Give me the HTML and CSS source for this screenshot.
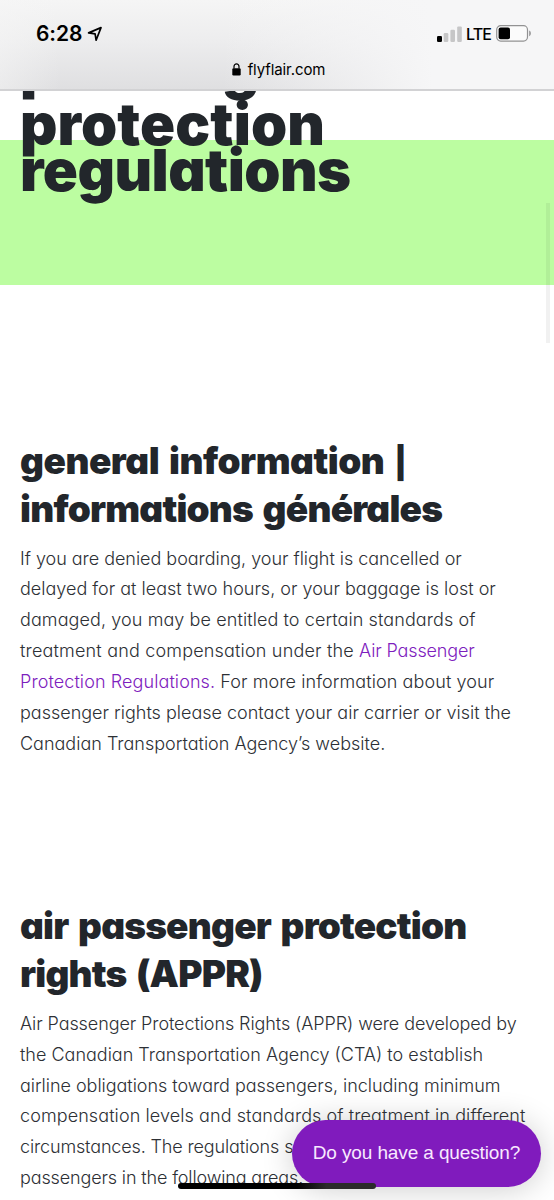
FILE: index.html
```html
<!DOCTYPE html>
<html lang="en">
<head>
<meta charset="utf-8">
<meta name="viewport" content="width=device-width, initial-scale=1">
<title>Passenger protection regulations</title>
<link rel="stylesheet" href="styles.css">
</head>
<body>
<div class="screen">
  <header class="browser">
    <div class="status">
      <div class="clock">
        <span class="time">6:28</span>
        <svg class="location" width="16" height="16" viewBox="0 0 16 16"><path d="M1.6 6.9 14 1.6 9.1 14.2 8.1 7.9Z" fill="none" stroke="#000" stroke-width="1.7" stroke-linejoin="round"/></svg>
      </div>
      <div class="indicators">
        <svg class="signal" width="25" height="16" viewBox="0 0 25 16"><rect x="0" y="10" width="5" height="6" rx="1.2" fill="#000"/><rect x="6.7" y="7" width="4.6" height="9" rx="1.2" fill="#c6c6c7"/><rect x="13.4" y="3.8" width="4.6" height="12.2" rx="1.2" fill="#c6c6c7"/><rect x="20.2" y="0.4" width="4.6" height="15.6" rx="1.2" fill="#c6c6c7"/></svg>
        <span class="network">LTE</span>
        <svg class="battery" width="36" height="17" viewBox="0 0 36 17"><rect x="0.7" y="0.7" width="30.8" height="15.4" rx="4" fill="#fbfbfb" stroke="#929293" stroke-width="1.2"/><rect x="2.6" y="2.6" width="11.4" height="11.6" rx="2" fill="#000"/><path d="M33.2 5.6c2.2.8 2.2 4.8 0 5.6Z" fill="#929293"/></svg>
      </div>
    </div>
    <div class="address">
      <svg class="lock" width="9" height="13" viewBox="0 0 9 13"><rect x="0.3" y="5.2" width="8.4" height="7.3" rx="1.2" fill="#000"/><path d="M2 5.6V3.4a2.5 2.6 0 0 1 5 0v2.2" fill="none" stroke="#000" stroke-width="1.2"/></svg>
      <span>flyflair.com</span>
    </div>
  </header>

  <main class="page">
    <section class="hero">
      <h1 class="title">
        <span class="line title-a">passenger</span>
        <span class="line title-b">protection</span>
        <span class="line title-c">regulations</span>
      </h1>
    </section>

    <section class="block general">
      <h2 class="heading"><span class="line h-a">general information <span class="pipe">|</span></span><span class="line h-b">informations générales</span></h2>
      <p class="copy">
        <span class="line snug">If you are denied boarding, your flight is cancelled or</span>
        <span class="line">delayed for at least two hours, or your baggage is lost or</span>
        <span class="line wide">damaged, you may be entitled to certain standards of</span>
        <span class="line wider">treatment and compensation under the <a class="link tighter">Air Passenger</a></span>
        <span class="line wide"><a class="link">Protection Regulations.</a> For more information about your</span>
        <span class="line">passenger rights please contact your air carrier or visit the</span>
        <span class="line">Canadian Transportation Agency’s website.</span>
      </p>
    </section>

    <section class="block rights">
      <h2 class="heading"><span class="line h-c">air passenger protection</span><span class="line h-d">rights (APPR)</span></h2>
      <p class="copy">
        <span class="line tight">Air Passenger Protections Rights (APPR) were developed by</span>
        <span class="line">the Canadian Transportation Agency (CTA) to establish</span>
        <span class="line snug">airline obligations toward passengers, including minimum</span>
        <span class="line wide">compensation levels and standards of treatment in different</span>
        <span class="line tighter">circumstances. The regulations set</span>
        <span class="line tighter">passengers in the following areas.</span>
      </p>
    </section>
  </main>

  <div class="scrollbar"></div>
  <button class="chat">Do you have a question?</button>
  <div class="home-bar"></div>
</div>
</body>
</html>
```

FILE: styles.css
```css
* { box-sizing: border-box; }
body { margin: 0; background: #fff; }

.screen {
  position: relative;
  width: 554px;
  height: 1200px;
  overflow: hidden;
  display: flex;
  flex-direction: column;
  background: #fff;
  color: #22262b;
  font-family: Inter, "Open Sans", sans-serif;
}
.line { display: block; white-space: nowrap; }

/* Browser chrome */
.browser {
  flex: none;
  height: 91px;
  border-bottom: 2px solid #d2d2d4;
  color: #000;
  background:
    linear-gradient(90deg, rgba(246,246,246,.5) 0, rgba(246,246,246,0) 60px),
    linear-gradient(90deg, rgba(246,246,247,0) 40%, #f6f6f7 78%),
    linear-gradient(180deg, #f5f5f5 0, #ededee 45%, #dfdfe1 100%);
}
.status {
  display: flex;
  justify-content: space-between;
  align-items: center;
  height: 58px;
  padding: 9px 22px 0 36px;
}
.clock, .indicators { display: flex; align-items: center; }
.clock { gap: 5px; }
.time { font-size: 21px; line-height: 24px; font-weight: 600; letter-spacing: -.1px; }
.indicators { gap: 5px; }
.network { font-size: 16px; line-height: 18px; font-weight: 500; letter-spacing: -.9px; }
.signal { margin-right: -1px; }
.address {
  display: flex;
  justify-content: center;
  align-items: center;
  gap: 7px;
  height: 22px;
  padding-left: 3px;
  font-size: 15px;
  letter-spacing: -.1px;
}

/* Page */
.page { flex: 1; overflow: hidden; font-feature-settings: "cv11"; }
.hero {
  display: flow-root;
  height: 194px;
  padding-left: 20px;
  background: linear-gradient(180deg, #fff 49px, #bcfda1 49px);
}
.title {
  margin: -47px 0 0;
  font-size: 58px;
  line-height: 46px;
  font-weight: 900;
}
.title-a { margin-bottom: 11px; letter-spacing: -2.3px; }
.title-b { letter-spacing: .1px; }
.title-c { letter-spacing: -.55px; }

.block { padding: 0 20px; }
.general { margin-top: 152px; }
.rights { margin-top: 143px; }
.heading { margin: 0 0 10.5px; font-size: 37px; line-height: 48px; font-weight: 900; word-spacing: 3px; }
.h-a { letter-spacing: -.5px; }
.h-b { letter-spacing: -.8px; }
.h-c { letter-spacing: -.8px; }
.h-d { letter-spacing: -.8px; }
.pipe { display: inline-block; font-size: 31px; line-height: 30px; }
.copy { margin: 0; font-size: 18px; line-height: 30.85px; font-weight: 300; color: #2d3035; }
.snug { letter-spacing: -.03px; }
.wide { letter-spacing: .09px; }
.wider { letter-spacing: .18px; }
.tight { letter-spacing: -.09px; }
.tighter { letter-spacing: -.14px; }
.link { color: #7d20bd; }

/* Overlays */
.scrollbar {
  position: absolute;
  top: 203px;
  right: 4px;
  width: 4px;
  height: 140px;
  background: rgba(0,0,0,.055);
}
.chat {
  position: absolute;
  top: 1120px;
  right: 13px;
  width: 249px;
  height: 67px;
  padding: 0 0 1px;
  border: 0;
  border-radius: 34px;
  background: #801bbd;
  box-shadow: 0 2px 32px rgba(0,0,0,.2);
  color: #f8e9ff;
  font: 19px "Liberation Sans", Arial, sans-serif;
  letter-spacing: -.12px;
}
.home-bar {
  position: absolute;
  top: 1183px;
  left: 178px;
  width: 198px;
  height: 6px;
  border-radius: 3px;
  background: linear-gradient(90deg, #000 60%, #2b2b2b 75%);
}
```
